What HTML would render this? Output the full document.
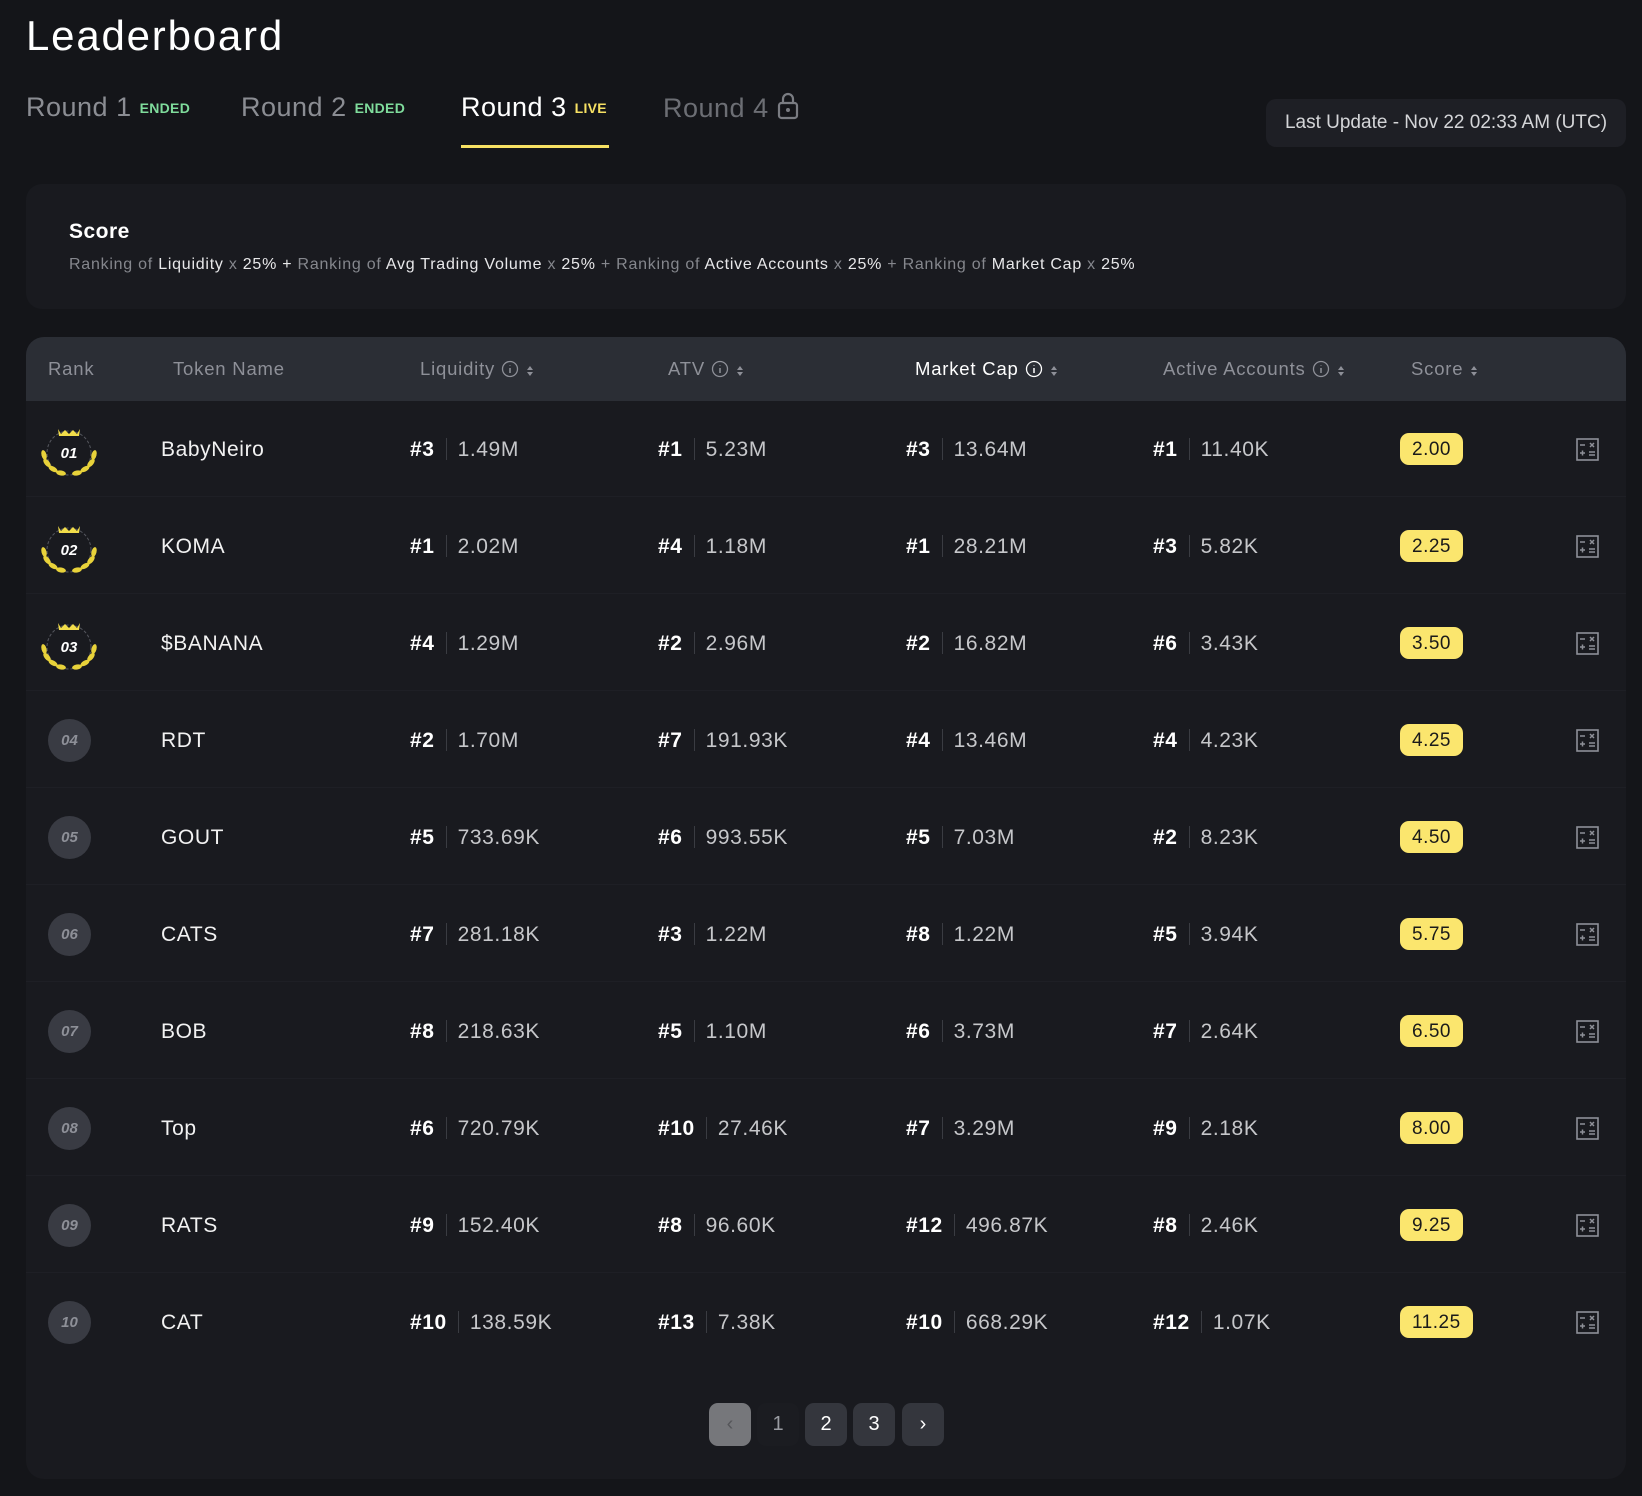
<!DOCTYPE html>
<html><head><meta charset="utf-8"><style>
*{margin:0;padding:0;box-sizing:border-box}
body{width:1642px;height:1496px;background:#141519;font-family:"Liberation Sans",sans-serif;color:#fff;position:relative;overflow:hidden}
.abs{position:absolute}
h1{position:absolute;left:26px;top:12px;font-size:42px;font-weight:400;letter-spacing:1.8px}
.tab{position:absolute;top:92px;font-size:27px;color:#8b8d93;white-space:nowrap;letter-spacing:0.5px}
.tab b{font-size:14px;font-weight:700;margin-left:8px;vertical-align:3px;letter-spacing:0.3px}
.upd{position:absolute;left:1266px;top:99px;width:360px;height:48px;border-radius:10px;background:#1e1f25;color:#d4d5d8;font-size:19px;line-height:48px;text-align:center}
.card{position:absolute;left:26px;top:184px;width:1600px;height:125px;border-radius:16px;background:#191a1f}
.card .t{position:absolute;left:43px;top:36px;font-size:21px;font-weight:700;letter-spacing:0.5px}
.card .f{position:absolute;left:43px;top:72px;font-size:16px;color:#e8e8ea;white-space:nowrap;letter-spacing:0.75px}
.card .f i{font-style:normal;color:#85878d}
.tbl{position:absolute;left:26px;top:337px;width:1600px;height:1142px;border-radius:18px;background:#191a1f;overflow:hidden}
.hdr{position:absolute;left:0;top:0;width:1600px;height:64px;background:#2b2e35}
.h{position:absolute;top:21px;font-size:18.5px;color:#8e9098;white-space:nowrap;letter-spacing:0.8px}
.h svg{vertical-align:-3px;margin-left:6px}
.row{position:absolute;left:0;width:1600px;height:97px;border-bottom:1px solid #1e1f25}
.c{position:absolute;top:38px;font-size:21px;white-space:nowrap;line-height:24px;letter-spacing:0.6px}
.rk{font-weight:700;color:#fff}
.sep{display:inline-block;width:1px;height:22px;background:#3a3c42;vertical-align:-4px;margin:0 11px}
.v{color:#c6c7ca}
.nm{left:135px;color:#f2f2f2}
.pill{position:absolute;left:1374px;top:33px;height:32px;line-height:33px;padding:0 12px;border-radius:9px;background:#fbe66e;color:#1a1a1a;font-size:19px;letter-spacing:0.5px}
.calc{position:absolute;left:1550px;top:38px}
.bd{position:absolute;left:22px;top:28px;width:43px;height:43px;border-radius:50%;background:#393b43;color:#8e9098;font-weight:700;font-style:italic;font-size:15px;text-align:center;line-height:43px}
.wr{position:absolute;left:36px;top:17px}
.pg{position:absolute;top:1403px;width:42px;height:43px;border-radius:9px;background:#34363d;color:#fff;font-size:20px;text-align:center;line-height:43px}
</style></head><body>
<h1>Leaderboard</h1>
<div class="tab" style="left:26px">Round 1<b style="color:#7fdc9c">ENDED</b></div>
<div class="tab" style="left:241px">Round 2<b style="color:#7fdc9c">ENDED</b></div>
<div class="tab" style="left:461px;color:#fff">Round 3<b style="color:#f7e163">LIVE</b></div>
<div class="abs" style="left:461px;top:145px;width:148px;height:3px;background:#f7e163"></div>
<div class="tab" style="left:663px;color:#6c6e74">Round 4 <svg width="22" height="28" viewBox="0 0 22 28" style="vertical-align:-3px"><rect x="2" y="11" width="18" height="15" rx="2.5" fill="none" stroke="#7a7c82" stroke-width="2.2"/><path d="M6 11V7a5 5 0 0 1 10 0v4" fill="none" stroke="#7a7c82" stroke-width="2.2"/><circle cx="11" cy="18" r="2" fill="#7a7c82"/></svg></div>
<div class="upd">Last Update - Nov 22 02:33 AM (UTC)</div>
<div class="card"><div class="t">Score</div>
<div class="f"><i>Ranking of </i>Liquidity<i> x </i>25% + <i>Ranking of </i>Avg Trading Volume<i> x </i>25%<i> + Ranking of </i>Active Accounts<i> x </i>25%<i> + Ranking of </i>Market Cap<i> x </i> 25%</div></div>

<svg width="0" height="0" style="position:absolute"><defs>
<g id="wreath"><circle cx="33" cy="36" r="22" fill="none" stroke="#55575e" stroke-width="1" stroke-dasharray="3 2"/><path d="M22 12l3 5 4-4 4 4 4-4 4 4 3-5-1 7H23z" fill="#f2dd4a"/>
<g fill="#e8d23a"><ellipse cx="8" cy="38" rx="2.5" ry="5" transform="rotate(-15 8 38)"/><ellipse cx="11" cy="46" rx="2.5" ry="5" transform="rotate(-40 11 46)"/><ellipse cx="17" cy="52" rx="2.5" ry="5" transform="rotate(-60 17 52)"/><ellipse cx="25" cy="56" rx="2.5" ry="5" transform="rotate(-80 25 56)"/>
<ellipse cx="58" cy="38" rx="2.5" ry="5" transform="rotate(15 58 38)"/><ellipse cx="55" cy="46" rx="2.5" ry="5" transform="rotate(40 55 46)"/><ellipse cx="49" cy="52" rx="2.5" ry="5" transform="rotate(60 49 52)"/><ellipse cx="41" cy="56" rx="2.5" ry="5" transform="rotate(80 41 56)"/></g></g>
</defs></svg>

<div class="tbl">
<div class="hdr">
<div class="h" style="left:22px">Rank</div>
<div class="h" style="left:147px">Token Name</div>
<div class="h" style="left:394px">Liquidity<svg width="18" height="18"><circle cx="9" cy="9" r="7.5" fill="none" stroke="#8e9098" stroke-width="1.3"/><path d="M9 8v5M9 5.5v.5" stroke="#8e9098" stroke-width="1.5"/></svg><svg width="10" height="14"><path d="M2 6l3-4 3 4zM2 8l3 4 3-4z" fill="#8e9098"/></svg></div>
<div class="h" style="left:642px">ATV<svg width="18" height="18"><circle cx="9" cy="9" r="7.5" fill="none" stroke="#8e9098" stroke-width="1.3"/><path d="M9 8v5M9 5.5v.5" stroke="#8e9098" stroke-width="1.5"/></svg><svg width="10" height="14"><path d="M2 6l3-4 3 4zM2 8l3 4 3-4z" fill="#8e9098"/></svg></div>
<div class="h" style="left:889px;color:#fff">Market Cap<svg width="18" height="18"><circle cx="9" cy="9" r="7.5" fill="none" stroke="#fff" stroke-width="1.3"/><path d="M9 8v5M9 5.5v.5" stroke="#fff" stroke-width="1.5"/></svg><svg width="10" height="14"><path d="M2 6l3-4 3 4zM2 8l3 4 3-4z" fill="#8e9098"/></svg></div>
<div class="h" style="left:1137px">Active Accounts<svg width="18" height="18"><circle cx="9" cy="9" r="7.5" fill="none" stroke="#8e9098" stroke-width="1.3"/><path d="M9 8v5M9 5.5v.5" stroke="#8e9098" stroke-width="1.5"/></svg><svg width="10" height="14"><path d="M2 6l3-4 3 4zM2 8l3 4 3-4z" fill="#8e9098"/></svg></div>
<div class="h" style="left:1385px">Score<svg width="10" height="14"><path d="M2 6l3-4 3 4zM2 8l3 4 3-4z" fill="#8e9098"/></svg></div>
</div>

<div class="row" style="top:63px">
<svg class="wr" width="66" height="66" viewBox="0 0 66 66" style="left:10px"><use href="#wreath"/><text x="33" y="41" text-anchor="middle" font-family="Liberation Sans" font-weight="700" font-style="italic" font-size="15" fill="#fff">01</text></svg>
<div class="c nm">BabyNeiro</div>
<div class="c" style="left:384px"><span class="rk">#3</span><span class="sep"></span><span class="v">1.49M</span></div>
<div class="c" style="left:632px"><span class="rk">#1</span><span class="sep"></span><span class="v">5.23M</span></div>
<div class="c" style="left:880px"><span class="rk">#3</span><span class="sep"></span><span class="v">13.64M</span></div>
<div class="c" style="left:1127px"><span class="rk">#1</span><span class="sep"></span><span class="v">11.40K</span></div>
<div class="pill">2.00</div>
<svg class="calc" width="23" height="23"><rect x="1" y="1" width="21" height="21" fill="none" stroke="#8e9098" stroke-width="1.6"/><path d="M4 7h5M14 5l4 4M18 5l-4 4M4 15h5M6.5 12.5v5M13 14h6M13 17h6" stroke="#8e9098" stroke-width="1.5"/></svg>
</div>

<div class="row" style="top:160px">
<svg class="wr" width="66" height="66" viewBox="0 0 66 66" style="left:10px"><use href="#wreath"/><text x="33" y="41" text-anchor="middle" font-family="Liberation Sans" font-weight="700" font-style="italic" font-size="15" fill="#fff">02</text></svg>
<div class="c nm">KOMA</div>
<div class="c" style="left:384px"><span class="rk">#1</span><span class="sep"></span><span class="v">2.02M</span></div>
<div class="c" style="left:632px"><span class="rk">#4</span><span class="sep"></span><span class="v">1.18M</span></div>
<div class="c" style="left:880px"><span class="rk">#1</span><span class="sep"></span><span class="v">28.21M</span></div>
<div class="c" style="left:1127px"><span class="rk">#3</span><span class="sep"></span><span class="v">5.82K</span></div>
<div class="pill">2.25</div>
<svg class="calc" width="23" height="23"><rect x="1" y="1" width="21" height="21" fill="none" stroke="#8e9098" stroke-width="1.6"/><path d="M4 7h5M14 5l4 4M18 5l-4 4M4 15h5M6.5 12.5v5M13 14h6M13 17h6" stroke="#8e9098" stroke-width="1.5"/></svg>
</div>

<div class="row" style="top:257px">
<svg class="wr" width="66" height="66" viewBox="0 0 66 66" style="left:10px"><use href="#wreath"/><text x="33" y="41" text-anchor="middle" font-family="Liberation Sans" font-weight="700" font-style="italic" font-size="15" fill="#fff">03</text></svg>
<div class="c nm">$BANANA</div>
<div class="c" style="left:384px"><span class="rk">#4</span><span class="sep"></span><span class="v">1.29M</span></div>
<div class="c" style="left:632px"><span class="rk">#2</span><span class="sep"></span><span class="v">2.96M</span></div>
<div class="c" style="left:880px"><span class="rk">#2</span><span class="sep"></span><span class="v">16.82M</span></div>
<div class="c" style="left:1127px"><span class="rk">#6</span><span class="sep"></span><span class="v">3.43K</span></div>
<div class="pill">3.50</div>
<svg class="calc" width="23" height="23"><rect x="1" y="1" width="21" height="21" fill="none" stroke="#8e9098" stroke-width="1.6"/><path d="M4 7h5M14 5l4 4M18 5l-4 4M4 15h5M6.5 12.5v5M13 14h6M13 17h6" stroke="#8e9098" stroke-width="1.5"/></svg>
</div>

<div class="row" style="top:354px"><div class="bd">04</div><div class="c nm">RDT</div>
<div class="c" style="left:384px"><span class="rk">#2</span><span class="sep"></span><span class="v">1.70M</span></div>
<div class="c" style="left:632px"><span class="rk">#7</span><span class="sep"></span><span class="v">191.93K</span></div>
<div class="c" style="left:880px"><span class="rk">#4</span><span class="sep"></span><span class="v">13.46M</span></div>
<div class="c" style="left:1127px"><span class="rk">#4</span><span class="sep"></span><span class="v">4.23K</span></div>
<div class="pill">4.25</div>
<svg class="calc" width="23" height="23"><rect x="1" y="1" width="21" height="21" fill="none" stroke="#8e9098" stroke-width="1.6"/><path d="M4 7h5M14 5l4 4M18 5l-4 4M4 15h5M6.5 12.5v5M13 14h6M13 17h6" stroke="#8e9098" stroke-width="1.5"/></svg></div>

<div class="row" style="top:451px"><div class="bd">05</div><div class="c nm">GOUT</div>
<div class="c" style="left:384px"><span class="rk">#5</span><span class="sep"></span><span class="v">733.69K</span></div>
<div class="c" style="left:632px"><span class="rk">#6</span><span class="sep"></span><span class="v">993.55K</span></div>
<div class="c" style="left:880px"><span class="rk">#5</span><span class="sep"></span><span class="v">7.03M</span></div>
<div class="c" style="left:1127px"><span class="rk">#2</span><span class="sep"></span><span class="v">8.23K</span></div>
<div class="pill">4.50</div>
<svg class="calc" width="23" height="23"><rect x="1" y="1" width="21" height="21" fill="none" stroke="#8e9098" stroke-width="1.6"/><path d="M4 7h5M14 5l4 4M18 5l-4 4M4 15h5M6.5 12.5v5M13 14h6M13 17h6" stroke="#8e9098" stroke-width="1.5"/></svg></div>

<div class="row" style="top:548px"><div class="bd">06</div><div class="c nm">CATS</div>
<div class="c" style="left:384px"><span class="rk">#7</span><span class="sep"></span><span class="v">281.18K</span></div>
<div class="c" style="left:632px"><span class="rk">#3</span><span class="sep"></span><span class="v">1.22M</span></div>
<div class="c" style="left:880px"><span class="rk">#8</span><span class="sep"></span><span class="v">1.22M</span></div>
<div class="c" style="left:1127px"><span class="rk">#5</span><span class="sep"></span><span class="v">3.94K</span></div>
<div class="pill">5.75</div>
<svg class="calc" width="23" height="23"><rect x="1" y="1" width="21" height="21" fill="none" stroke="#8e9098" stroke-width="1.6"/><path d="M4 7h5M14 5l4 4M18 5l-4 4M4 15h5M6.5 12.5v5M13 14h6M13 17h6" stroke="#8e9098" stroke-width="1.5"/></svg></div>

<div class="row" style="top:645px"><div class="bd">07</div><div class="c nm">BOB</div>
<div class="c" style="left:384px"><span class="rk">#8</span><span class="sep"></span><span class="v">218.63K</span></div>
<div class="c" style="left:632px"><span class="rk">#5</span><span class="sep"></span><span class="v">1.10M</span></div>
<div class="c" style="left:880px"><span class="rk">#6</span><span class="sep"></span><span class="v">3.73M</span></div>
<div class="c" style="left:1127px"><span class="rk">#7</span><span class="sep"></span><span class="v">2.64K</span></div>
<div class="pill">6.50</div>
<svg class="calc" width="23" height="23"><rect x="1" y="1" width="21" height="21" fill="none" stroke="#8e9098" stroke-width="1.6"/><path d="M4 7h5M14 5l4 4M18 5l-4 4M4 15h5M6.5 12.5v5M13 14h6M13 17h6" stroke="#8e9098" stroke-width="1.5"/></svg></div>

<div class="row" style="top:742px"><div class="bd">08</div><div class="c nm">Top</div>
<div class="c" style="left:384px"><span class="rk">#6</span><span class="sep"></span><span class="v">720.79K</span></div>
<div class="c" style="left:632px"><span class="rk">#10</span><span class="sep"></span><span class="v">27.46K</span></div>
<div class="c" style="left:880px"><span class="rk">#7</span><span class="sep"></span><span class="v">3.29M</span></div>
<div class="c" style="left:1127px"><span class="rk">#9</span><span class="sep"></span><span class="v">2.18K</span></div>
<div class="pill">8.00</div>
<svg class="calc" width="23" height="23"><rect x="1" y="1" width="21" height="21" fill="none" stroke="#8e9098" stroke-width="1.6"/><path d="M4 7h5M14 5l4 4M18 5l-4 4M4 15h5M6.5 12.5v5M13 14h6M13 17h6" stroke="#8e9098" stroke-width="1.5"/></svg></div>

<div class="row" style="top:839px"><div class="bd">09</div><div class="c nm">RATS</div>
<div class="c" style="left:384px"><span class="rk">#9</span><span class="sep"></span><span class="v">152.40K</span></div>
<div class="c" style="left:632px"><span class="rk">#8</span><span class="sep"></span><span class="v">96.60K</span></div>
<div class="c" style="left:880px"><span class="rk">#12</span><span class="sep"></span><span class="v">496.87K</span></div>
<div class="c" style="left:1127px"><span class="rk">#8</span><span class="sep"></span><span class="v">2.46K</span></div>
<div class="pill">9.25</div>
<svg class="calc" width="23" height="23"><rect x="1" y="1" width="21" height="21" fill="none" stroke="#8e9098" stroke-width="1.6"/><path d="M4 7h5M14 5l4 4M18 5l-4 4M4 15h5M6.5 12.5v5M13 14h6M13 17h6" stroke="#8e9098" stroke-width="1.5"/></svg></div>

<div class="row" style="top:936px;border-bottom:none"><div class="bd">10</div><div class="c nm">CAT</div>
<div class="c" style="left:384px"><span class="rk">#10</span><span class="sep"></span><span class="v">138.59K</span></div>
<div class="c" style="left:632px"><span class="rk">#13</span><span class="sep"></span><span class="v">7.38K</span></div>
<div class="c" style="left:880px"><span class="rk">#10</span><span class="sep"></span><span class="v">668.29K</span></div>
<div class="c" style="left:1127px"><span class="rk">#12</span><span class="sep"></span><span class="v">1.07K</span></div>
<div class="pill">11.25</div>
<svg class="calc" width="23" height="23"><rect x="1" y="1" width="21" height="21" fill="none" stroke="#8e9098" stroke-width="1.6"/><path d="M4 7h5M14 5l4 4M18 5l-4 4M4 15h5M6.5 12.5v5M13 14h6M13 17h6" stroke="#8e9098" stroke-width="1.5"/></svg></div>
</div>

<div class="pg" style="left:709px;background:#76777b;color:#55565a">‹</div>
<div class="pg" style="left:757px;background:#1b1c21;color:#9a9ca2">1</div>
<div class="pg" style="left:805px">2</div>
<div class="pg" style="left:853px">3</div>
<div class="pg" style="left:902px">›</div>
</body></html>
